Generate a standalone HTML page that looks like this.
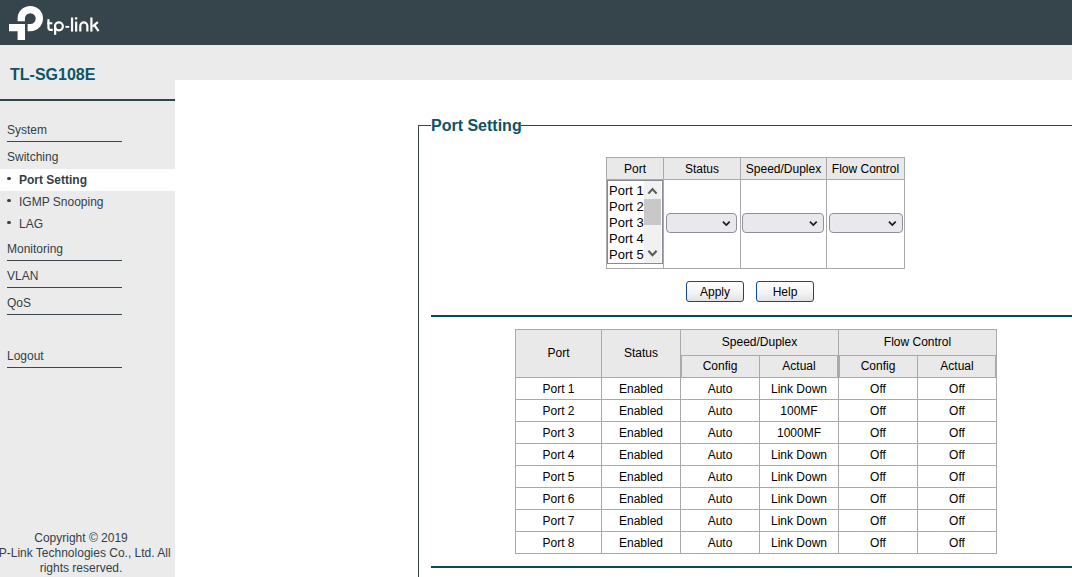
<!DOCTYPE html>
<html><head><meta charset="utf-8">
<style>
html,body{margin:0;padding:0;}
body{width:1072px;height:577px;overflow:hidden;position:relative;background:#fff;font-family:"Liberation Sans",sans-serif;font-size:12px;color:#000;}
.a{position:absolute;}
#hdr{left:0;top:0;width:1072px;height:45px;background:#36444c;}
#band{left:0;top:45px;width:1072px;height:35px;background:#ebebeb;}
#side{left:0;top:80px;width:175px;height:497px;background:#ebebeb;}
#model{left:10px;top:65px;font-size:16px;font-weight:bold;color:#0b5568;line-height:20px;white-space:nowrap;}
#mline{left:0;top:99px;width:175px;height:2px;background:#34424a;}
.mi{left:7px;font-size:12px;color:#333f47;line-height:14px;white-space:nowrap;}
.ul{left:7px;width:115px;height:1px;background:#3b474e;}
.sub{left:0;width:175px;height:22px;line-height:22px;font-size:12px;color:#333f47;white-space:nowrap;}
.sub b{font-weight:bold;}
.dot{position:absolute;left:7.2px;top:8.2px;width:3.6px;height:3.2px;border-radius:50%;background:#333f47;}
.sub span{position:absolute;left:19px;top:0;}
#copy{left:-9px;top:531px;width:180px;text-align:center;font-size:12px;line-height:15px;color:#333f47;}
.ln{background:#aaa;}
.c{text-align:center;white-space:nowrap;}
.sel{height:18px;border:1px solid #8f8f9d;border-radius:4px;background:#e9e9ed;}
.btn{width:56px;height:19px;border:1px solid #144a84;border-radius:3px;background:linear-gradient(#fdfdfd 0%,#f4f4f4 55%,#e2e2e2 100%);text-align:center;line-height:21px;font-size:12px;color:#000;}
</style></head><body>
<div id="hdr" class="a">
<svg width="110" height="45" style="position:absolute;left:0;top:0">
<g fill="#fff">
<path d="M17.6 21.3 V18.6 A12.7 12.7 0 1 1 30.3 31.3 H27.6 V24 H30.3 A5.4 5.4 0 1 0 24.9 18.6 V21.3 Z"/>
<path d="M9 24 H25 V40 H17.6 V31.3 H9 Z"/>
</g>
<g fill="none" stroke="#fff" stroke-width="2.2" stroke-linecap="butt">
<path d="M48.45 19.2 V27.5 Q48.45 29.8 50.7 29.8 H52.8"/>
<path d="M47.4 23.25 H52.3" stroke-width="2.1"/>
<circle cx="58.9" cy="26.35" r="3.95"/>
<path d="M55.15 26.3 V34.8"/>
<path d="M65.4 26.85 H69.2" stroke-width="1.9"/>
<path d="M72.05 17.5 V31.6"/>
<path d="M76.15 21.6 V31.6"/>
<path d="M80.3 31.6 V25.9 A3.525 3.525 0 0 1 87.35 25.9 V31.6"/>
<path d="M91.4 17.5 V31.6"/>
<path d="M97.9 22.2 L92.4 26.5"/>
<path d="M94.3 25 L98.6 31.2"/>
</g>
<rect x="74.95" y="17.3" width="2.35" height="2.3" rx="0.5" fill="#fff"/>
</svg>
</div>
<div id="band" class="a"></div>
<div id="side" class="a"></div>
<div id="model" class="a">TL-SG108E</div>
<div id="mline" class="a"></div>

<div class="a mi" style="top:123px">System</div>
<div class="a ul" style="top:141px"></div>
<div class="a mi" style="top:150px">Switching</div>
<div class="a sub" style="top:169px;background:#fff"><i class="dot"></i><span><b>Port Setting</b></span></div>
<div class="a sub" style="top:191px"><i class="dot"></i><span>IGMP Snooping</span></div>
<div class="a sub" style="top:213px"><i class="dot"></i><span>LAG</span></div>
<div class="a mi" style="top:242px">Monitoring</div>
<div class="a ul" style="top:260px"></div>
<div class="a mi" style="top:269px">VLAN</div>
<div class="a ul" style="top:287px"></div>
<div class="a mi" style="top:296px">QoS</div>
<div class="a ul" style="top:314px"></div>
<div class="a mi" style="top:349px">Logout</div>
<div class="a ul" style="top:367px"></div>

<div id="copy" class="a">Copyright © 2019</div>
<div class="a" style="left:-11px;top:546px;width:184px;text-align:center;font-size:12px;line-height:15px;color:#333f47;white-space:nowrap">TP-Link Technologies Co., Ltd. All</div>
<div class="a" style="left:-9px;top:561px;width:180px;text-align:center;font-size:12px;line-height:15px;color:#333f47;white-space:nowrap">rights reserved.</div>

<!-- fieldset -->
<div class="a" style="left:418px;top:125px;width:1px;height:452px;background:#36444c"></div>
<div class="a" style="left:418px;top:125px;width:13px;height:1px;background:#36444c"></div>
<div class="a" style="left:521px;top:125px;width:551px;height:1px;background:#36444c"></div>
<div class="a" style="left:431px;top:116px;font-size:16px;font-weight:bold;color:#0b5366;line-height:20px;white-space:nowrap">Port Setting</div>

<div class="a" style="left:431px;top:315px;width:641px;height:2px;background:#074a5a"></div>
<div class="a" style="left:431px;top:566px;width:641px;height:2px;background:#074a5a"></div>

<div class="a" style="left:607px;top:158px;width:297px;height:21px;background:#e9e9e9;"></div>
<div class="a" style="left:606px;top:157px;width:299px;height:1px;background:#aaa;"></div>
<div class="a" style="left:606px;top:268px;width:299px;height:1px;background:#aaa;"></div>
<div class="a" style="left:606px;top:157px;width:1px;height:112px;background:#aaa;"></div>
<div class="a" style="left:904px;top:157px;width:1px;height:112px;background:#aaa;"></div>
<div class="a" style="left:663px;top:157px;width:1px;height:112px;background:#aaa;"></div>
<div class="a" style="left:740px;top:157px;width:1px;height:112px;background:#aaa;"></div>
<div class="a" style="left:826px;top:157px;width:1px;height:112px;background:#aaa;"></div>
<div class="a" style="left:606px;top:179px;width:299px;height:1px;background:#aaa;"></div>
<div class="a c" style="left:607px;top:162px;width:56px;line-height:14px;">Port</div>
<div class="a c" style="left:664px;top:162px;width:76px;line-height:14px;">Status</div>
<div class="a c" style="left:741px;top:162px;width:85px;line-height:14px;">Speed/Duplex</div>
<div class="a c" style="left:827px;top:162px;width:77px;line-height:14px;">Flow Control</div>
<div class="a" style="left:516px;top:330px;width:480px;height:47px;background:#e9e9e9;"></div>
<div class="a" style="left:515px;top:329px;width:482px;height:1px;background:#aaa;"></div>
<div class="a" style="left:515px;top:553px;width:482px;height:1px;background:#aaa;"></div>
<div class="a" style="left:515px;top:329px;width:1px;height:225px;background:#aaa;"></div>
<div class="a" style="left:996px;top:329px;width:1px;height:225px;background:#aaa;"></div>
<div class="a" style="left:601px;top:329px;width:1px;height:225px;background:#aaa;"></div>
<div class="a" style="left:680px;top:329px;width:1px;height:225px;background:#aaa;"></div>
<div class="a" style="left:838px;top:329px;width:1px;height:225px;background:#aaa;"></div>
<div class="a" style="left:759px;top:355px;width:1px;height:199px;background:#aaa;"></div>
<div class="a" style="left:917px;top:355px;width:1px;height:199px;background:#aaa;"></div>
<div class="a" style="left:680px;top:355px;width:317px;height:1px;background:#aaa;"></div>
<div class="a" style="left:515px;top:377px;width:482px;height:1px;background:#aaa;"></div>
<div class="a" style="left:515px;top:399px;width:482px;height:1px;background:#aaa;"></div>
<div class="a" style="left:515px;top:421px;width:482px;height:1px;background:#aaa;"></div>
<div class="a" style="left:515px;top:443px;width:482px;height:1px;background:#aaa;"></div>
<div class="a" style="left:515px;top:465px;width:482px;height:1px;background:#aaa;"></div>
<div class="a" style="left:515px;top:487px;width:482px;height:1px;background:#aaa;"></div>
<div class="a" style="left:515px;top:509px;width:482px;height:1px;background:#aaa;"></div>
<div class="a" style="left:515px;top:531px;width:482px;height:1px;background:#aaa;"></div>
<div class="a" style="left:515px;top:553px;width:482px;height:1px;background:#aaa;"></div>
<div class="a" style="left:681px;top:356px;width:1px;height:21px;background:#aaa;"></div>
<div class="a" style="left:837px;top:356px;width:1px;height:21px;background:#aaa;"></div>
<div class="a" style="left:839px;top:356px;width:1px;height:21px;background:#aaa;"></div>
<div class="a" style="left:995px;top:356px;width:1px;height:21px;background:#aaa;"></div>
<div class="a c" style="left:516px;top:346px;width:85px;line-height:14px;">Port</div>
<div class="a c" style="left:602px;top:346px;width:78px;line-height:14px;">Status</div>
<div class="a c" style="left:681px;top:335px;width:157px;line-height:14px;">Speed/Duplex</div>
<div class="a c" style="left:839px;top:335px;width:157px;line-height:14px;">Flow Control</div>
<div class="a c" style="left:681px;top:359px;width:78px;line-height:14px;">Config</div>
<div class="a c" style="left:760px;top:359px;width:78px;line-height:14px;">Actual</div>
<div class="a c" style="left:839px;top:359px;width:78px;line-height:14px;">Config</div>
<div class="a c" style="left:918px;top:359px;width:78px;line-height:14px;">Actual</div>
<div class="a c" style="left:516px;top:382px;width:85px;line-height:14px;">Port 1</div>
<div class="a c" style="left:602px;top:382px;width:78px;line-height:14px;">Enabled</div>
<div class="a c" style="left:681px;top:382px;width:78px;line-height:14px;">Auto</div>
<div class="a c" style="left:760px;top:382px;width:78px;line-height:14px;">Link Down</div>
<div class="a c" style="left:839px;top:382px;width:78px;line-height:14px;">Off</div>
<div class="a c" style="left:918px;top:382px;width:78px;line-height:14px;">Off</div>
<div class="a c" style="left:516px;top:404px;width:85px;line-height:14px;">Port 2</div>
<div class="a c" style="left:602px;top:404px;width:78px;line-height:14px;">Enabled</div>
<div class="a c" style="left:681px;top:404px;width:78px;line-height:14px;">Auto</div>
<div class="a c" style="left:760px;top:404px;width:78px;line-height:14px;">100MF</div>
<div class="a c" style="left:839px;top:404px;width:78px;line-height:14px;">Off</div>
<div class="a c" style="left:918px;top:404px;width:78px;line-height:14px;">Off</div>
<div class="a c" style="left:516px;top:426px;width:85px;line-height:14px;">Port 3</div>
<div class="a c" style="left:602px;top:426px;width:78px;line-height:14px;">Enabled</div>
<div class="a c" style="left:681px;top:426px;width:78px;line-height:14px;">Auto</div>
<div class="a c" style="left:760px;top:426px;width:78px;line-height:14px;">1000MF</div>
<div class="a c" style="left:839px;top:426px;width:78px;line-height:14px;">Off</div>
<div class="a c" style="left:918px;top:426px;width:78px;line-height:14px;">Off</div>
<div class="a c" style="left:516px;top:448px;width:85px;line-height:14px;">Port 4</div>
<div class="a c" style="left:602px;top:448px;width:78px;line-height:14px;">Enabled</div>
<div class="a c" style="left:681px;top:448px;width:78px;line-height:14px;">Auto</div>
<div class="a c" style="left:760px;top:448px;width:78px;line-height:14px;">Link Down</div>
<div class="a c" style="left:839px;top:448px;width:78px;line-height:14px;">Off</div>
<div class="a c" style="left:918px;top:448px;width:78px;line-height:14px;">Off</div>
<div class="a c" style="left:516px;top:470px;width:85px;line-height:14px;">Port 5</div>
<div class="a c" style="left:602px;top:470px;width:78px;line-height:14px;">Enabled</div>
<div class="a c" style="left:681px;top:470px;width:78px;line-height:14px;">Auto</div>
<div class="a c" style="left:760px;top:470px;width:78px;line-height:14px;">Link Down</div>
<div class="a c" style="left:839px;top:470px;width:78px;line-height:14px;">Off</div>
<div class="a c" style="left:918px;top:470px;width:78px;line-height:14px;">Off</div>
<div class="a c" style="left:516px;top:492px;width:85px;line-height:14px;">Port 6</div>
<div class="a c" style="left:602px;top:492px;width:78px;line-height:14px;">Enabled</div>
<div class="a c" style="left:681px;top:492px;width:78px;line-height:14px;">Auto</div>
<div class="a c" style="left:760px;top:492px;width:78px;line-height:14px;">Link Down</div>
<div class="a c" style="left:839px;top:492px;width:78px;line-height:14px;">Off</div>
<div class="a c" style="left:918px;top:492px;width:78px;line-height:14px;">Off</div>
<div class="a c" style="left:516px;top:514px;width:85px;line-height:14px;">Port 7</div>
<div class="a c" style="left:602px;top:514px;width:78px;line-height:14px;">Enabled</div>
<div class="a c" style="left:681px;top:514px;width:78px;line-height:14px;">Auto</div>
<div class="a c" style="left:760px;top:514px;width:78px;line-height:14px;">Link Down</div>
<div class="a c" style="left:839px;top:514px;width:78px;line-height:14px;">Off</div>
<div class="a c" style="left:918px;top:514px;width:78px;line-height:14px;">Off</div>
<div class="a c" style="left:516px;top:536px;width:85px;line-height:14px;">Port 8</div>
<div class="a c" style="left:602px;top:536px;width:78px;line-height:14px;">Enabled</div>
<div class="a c" style="left:681px;top:536px;width:78px;line-height:14px;">Auto</div>
<div class="a c" style="left:760px;top:536px;width:78px;line-height:14px;">Link Down</div>
<div class="a c" style="left:839px;top:536px;width:78px;line-height:14px;">Off</div>
<div class="a c" style="left:918px;top:536px;width:78px;line-height:14px;">Off</div>
<!-- listbox -->
<div class="a" style="left:607px;top:180px;width:54px;height:82px;border:1px solid #8a8a96;background:#fff;"></div>
<div class="a" style="left:609px;top:183px;font-size:13px;line-height:16px;white-space:nowrap;color:#000">Port 1<br>Port 2<br>Port 3<br>Port 4<br>Port 5</div>
<div class="a" style="left:644px;top:181px;width:17px;height:82px;background:#f1f1f1"></div>
<div class="a" style="left:644px;top:199px;width:17px;height:26px;background:#c8c8c8"></div>
<svg class="a" style="left:644px;top:181px" width="17" height="82"><g fill="none" stroke="#5a5a5a" stroke-width="2.1"><path d="M4.4 12.6 L8.5 8.1 L12.6 12.6"/><path d="M4.4 69.8 L8.5 74.3 L12.6 69.8"/></g></svg>
<!-- selects -->
<div class="a sel" style="left:666px;top:213px;width:69px;"><svg width="9" height="7" style="position:absolute;right:5px;top:6px"><path d="M0.9 1.6 L4.3 5.0 L7.7 1.6" fill="none" stroke="#1c1c1c" stroke-width="1.7"/></svg></div>
<div class="a sel" style="left:742px;top:213px;width:80px;"><svg width="9" height="7" style="position:absolute;right:5px;top:6px"><path d="M0.9 1.6 L4.3 5.0 L7.7 1.6" fill="none" stroke="#1c1c1c" stroke-width="1.7"/></svg></div>
<div class="a sel" style="left:829px;top:213px;width:72px;"><svg width="9" height="7" style="position:absolute;right:5px;top:6px"><path d="M0.9 1.6 L4.3 5.0 L7.7 1.6" fill="none" stroke="#1c1c1c" stroke-width="1.7"/></svg></div>
<!-- buttons -->
<div class="a btn" style="left:686px;top:281px;">Apply</div>
<div class="a btn" style="left:756px;top:281px;">Help</div>

</body></html>
